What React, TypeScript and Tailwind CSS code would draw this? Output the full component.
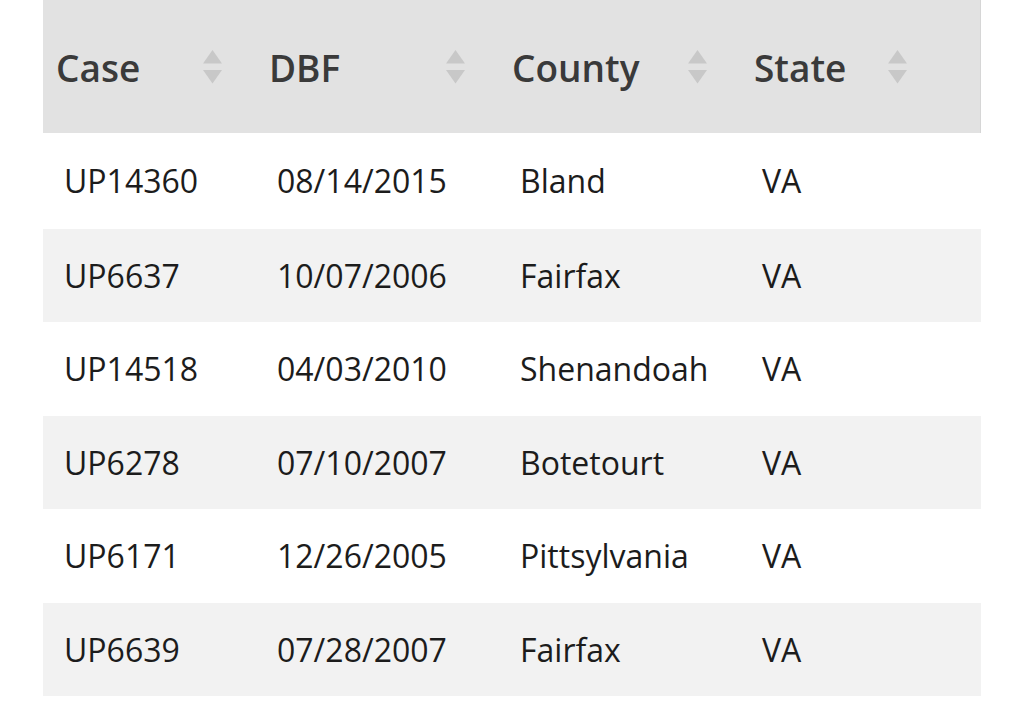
import React from "react";

const rows = [
  ["UP14360", "08/14/2015", "Bland", "VA"],
  ["UP6637", "10/07/2006", "Fairfax", "VA"],
  ["UP14518", "04/03/2010", "Shenandoah", "VA"],
  ["UP6278", "07/10/2007", "Botetourt", "VA"],
  ["UP6171", "12/26/2005", "Pittsylvania", "VA"],
  ["UP6639", "07/28/2007", "Fairfax", "VA"],
];

const heights = ["h-[96px]", "h-[93px]", "h-[94px]", "h-[93px]", "h-[94px]", "h-[93px]"];

function SortIcon() {
  return (
    <svg width="19" height="34" viewBox="0 0 19 34" className="shrink-0">
      <polygon points="9.5,0 19,13.5 0,13.5" fill="#c8c8c8" />
      <polygon points="0,20 19,20 9.5,33.5" fill="#c8c8c8" />
    </svg>
  );
}

const headers = ["Case", "DBF", "County", "State"];

export default function App() {
  return (
    <div
      className="w-[1024px] h-[721px] bg-white overflow-hidden"
      style={{ fontFamily: '"Open Sans", "Noto Sans", sans-serif' }}
    >
      <div className="ml-[43px] w-[938px]">
        <div className="grid grid-cols-[213px_243px_242px_200px_40px] h-[133px] bg-[#e2e2e2] border-r border-[#d6d6d6]">
          {headers.map((h) => (
            <div key={h} className="flex items-center justify-between pl-[13px] pr-[34px] pt-[1px]">
              <span className="text-[37px] font-semibold text-[#3a3a3a] leading-none">{h}</span>
              <SortIcon />
            </div>
          ))}
          <div />
        </div>
        {rows.map((r, i) => (
          <div
            key={i}
            className={`grid grid-cols-[213px_243px_242px_240px] items-center ${heights[i]} ${
              i % 2 === 1 ? "bg-[#f2f2f2]" : "bg-white"
            }`}
          >
            {r.map((c, j) => (
              <div key={j} className="pl-[21px] text-[32px] text-[#1c1c1c] leading-none">
                {c}
              </div>
            ))}
          </div>
        ))}
      </div>
    </div>
  );
}
